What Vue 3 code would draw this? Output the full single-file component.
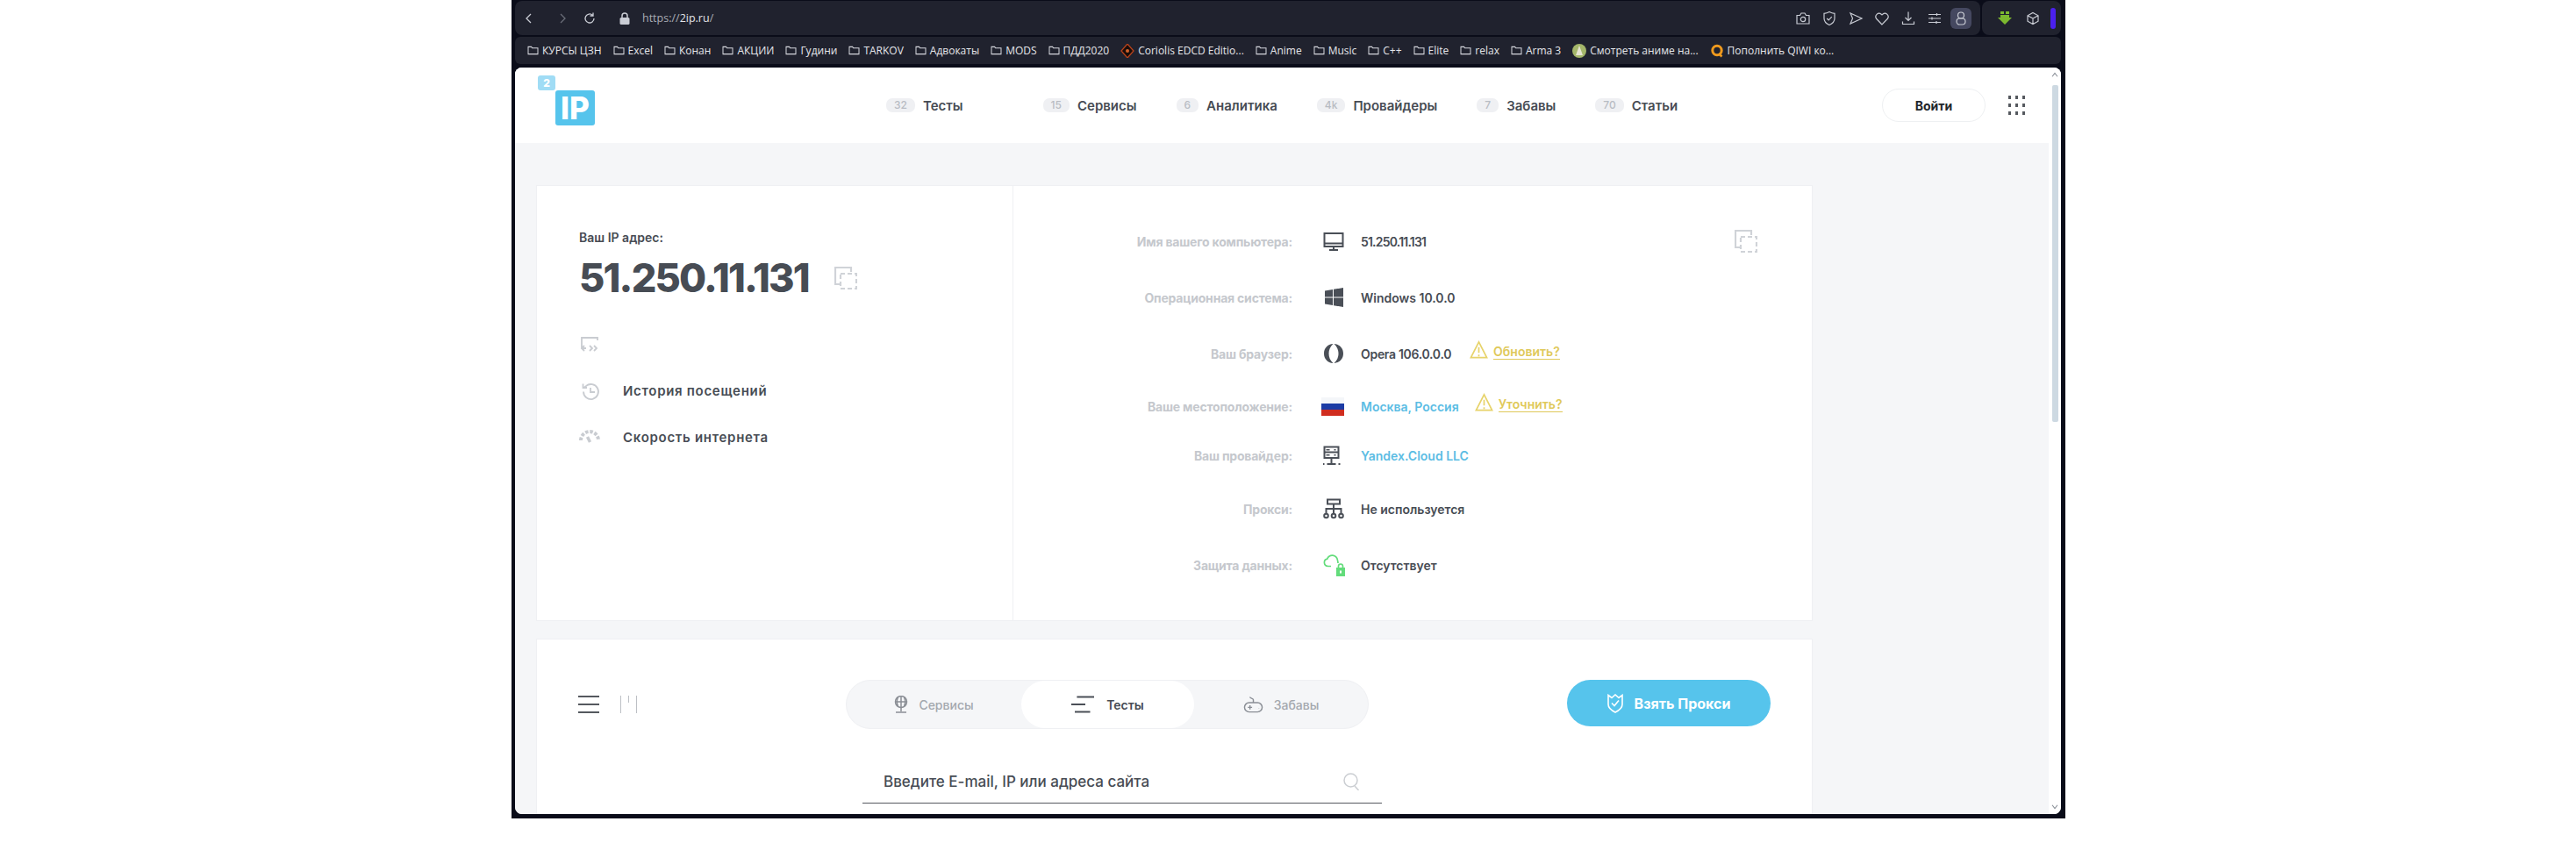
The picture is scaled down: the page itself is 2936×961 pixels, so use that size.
<script setup>
const bookmarks = [
  { t: 'КУРСЫ ЦЗН' }, { t: 'Excel' }, { t: 'Конан' }, { t: 'АКЦИИ' }, { t: 'Гудини' }, { t: 'TARKOV' },
  { t: 'Адвокаты' }, { t: 'MODS' }, { t: 'ПДД2020' }, { t: 'Coriolis EDCD Editio...', icon: 'cor' },
  { t: 'Anime' }, { t: 'Music' }, { t: 'C++' }, { t: 'Elite' }, { t: 'relax' }, { t: 'Arma 3' },
  { t: 'Смотреть аниме на...', icon: 'ani' }, { t: 'Пополнить QIWI ко...', icon: 'qiwi' }
]
const nav = [
  { n: '32', t: 'Тесты' }, { n: '15', t: 'Сервисы' }, { n: '6', t: 'Аналитика' },
  { n: '4k', t: 'Провайдеры' }, { n: '7', t: 'Забавы' }, { n: '70', t: 'Статьи' }
]
</script>

<template>
  <div class="window">
    <div class="toolbar">
      <div class="urlbar">
        <svg class="nb back" viewBox="0 0 16 16"><path d="M10 3 5 8l5 5" /></svg>
        <svg class="nb fwd dim" viewBox="0 0 16 16"><path d="m6 3 5 5-5 5" /></svg>
        <svg class="nb rel" viewBox="0 0 16 16"><path d="M13 8a5 5 0 1 1-1.600-3.700M12 1.500V5H8.500" /></svg>
        <svg class="lock" viewBox="0 0 12 14"><path d="M3 6.500V4a3 3 0 0 1 6 0v2.500" fill="none" stroke="#c9ccd4" stroke-width="1.500" /><rect x="0.500" y="6" width="11" height="8" rx="1.500" fill="#c9ccd4" /></svg>
        <span class="url">https://<b>2ip.ru</b>/</span>
        <span class="spacer"></span>
        <div class="actions">
          <svg class="tb" viewBox="0 0 18 18"><path d="M2 5.500h3.500L7 3h4l1.500 2.500H16v9.500H2z" /><circle cx="9" cy="10" r="2.700" /></svg>
          <svg class="tb" viewBox="0 0 18 18"><path d="M9 1.500c2 1.200 4 1.700 6 1.800V9c0 3.500-2.700 6-6 7.500C5.700 15 3 12.500 3 9V3.300c2-.1 4-.6 6-1.800zM6.200 9l2 2 3.600-3.800" /></svg>
          <svg class="tb" viewBox="0 0 18 18"><path d="M3 3 16 9 3 15l2.500-6z" /></svg>
          <svg class="tb" viewBox="0 0 18 18"><path d="M9 16 2.800 9.500a3.800 3.800 0 0 1 5.400-5.300l.8.800.8-.8a3.800 3.800 0 0 1 5.400 5.300z" /></svg>
          <svg class="tb" viewBox="0 0 18 18"><path d="M9 1.500v9.500M5.500 8 9 11.500 12.500 8M2.500 12.500v3h13v-3" /></svg>
          <svg class="tb" viewBox="0 0 18 18"><path d="M2 4.500h14M2 9h14M2 13.500h14M11.500 3v3M6 7.500v3M11 12v3" /></svg>
        </div>
        <span class="avatar"><svg class="tb" viewBox="0 0 18 18"><circle cx="9" cy="5.500" r="3.500" /><rect x="4" y="9" width="10" height="7" rx="3.500" /></svg></span>
      </div>
      <div class="extbar">
        <svg class="ext-dl" viewBox="0 0 16 15"><path d="M3 0h4v3H3zM9 0h4v3H9zM3 4h10v3h3l-8 8-8-8h3z" fill="#7cb82f" /></svg>
        <svg class="tb box" viewBox="0 0 16 16"><path d="M8 1.500 14 4.800v6.400L8 14.500l-6-3.300V4.800zM2 4.800 8 8l6-3.200M8 8v6.500" /></svg>
        <span class="purple"></span>
      </div>
    </div>
    <div class="bookmarks">
      <span v-for="b in bookmarks" :key="b.t" class="bm">
        <svg v-if="!b.icon" class="folder" viewBox="0 0 14 12"><path d="M1 10.500V1.500h4l1 1.500h7v7.500z" /></svg>
        <svg v-else-if="b.icon === 'cor'" class="fav" viewBox="0 0 16 16"><path d="M8 0 15 8 8 16 1 8z" fill="#1a0d0a" stroke="#b8431c" stroke-width="1.300" /><circle cx="8" cy="8" r="2" fill="#d2622a" /></svg>
        <svg v-else-if="b.icon === 'ani'" class="fav" viewBox="0 0 16 16"><circle cx="8" cy="8" r="8" fill="#a4b66a" /><path d="M8 2 12 13H4z" fill="#e6e4d2" /></svg>
        <svg v-else class="fav" viewBox="0 0 16 16"><circle cx="8" cy="7.500" r="5.200" fill="none" stroke="#ef9a1e" stroke-width="3" /><path d="m10 11 3.500 3.500" stroke="#ef9a1e" stroke-width="2.500" /></svg>
        {{ b.t }}
      </span>
    </div>

    <div class="page">
      <div class="content">
        <header class="head">
          <div class="logo">
            <span class="logo-2">2</span>
            <span class="logo-ip">IP</span>
          </div>
          <nav class="nav">
            <a v-for="i in nav" :key="i.t" class="nav-item"><span class="count">{{ i.n }}</span>{{ i.t }}</a>
          </nav>
          <button class="login">Войти</button>
          <div class="dots"><i v-for="d in 9" :key="d"></i></div>
        </header>

        <main class="main">
          <section class="card info">
            <div class="left">
              <div class="ip-label">Ваш IP адрес:</div>
              <div class="ip-row">
                <span class="ip">51.250.11.131</span>
                <svg class="copy big" viewBox="0 0 26 26"><path d="M6 20H1V1h18v5" /><path stroke-dasharray="5 3" d="M7 8h18v17H7z" /></svg>
              </div>
              <div class="links">
                <div class="link">
                  <svg class="lic" viewBox="0 0 24 24"><path d="M21 7V4H3v12h5M6 13l-3 3 3 3M12 13l3 3-3 3M17 13l3 3-3 3" /></svg>
                </div>
                <div class="link">
                  <svg class="lic" viewBox="0 0 24 24"><path d="M5 12.500a8.500 8.500 0 1 0 2.800-6.300L5.500 8M4.500 3.500V8h4.500M13 8v5h5" /></svg>
                  <span>История посещений</span>
                </div>
                <div class="link">
                  <svg class="lic" viewBox="0 0 24 24"><path stroke-width="4" stroke-dasharray="3.500 1.800" d="M2 15a10 10 0 0 1 20 0" /><path d="m9.500 11 3 6" stroke-width="3.500" /></svg>
                  <span>Скорость интернета</span>
                </div>
              </div>
            </div>
            <div class="right">
              <div class="rows">
                <div class="row r1">
                  <span class="k">Имя вашего компьютера:</span>
                  <svg class="ric" viewBox="0 0 24 24"><path d="M1.500 3h21v15h-21zM1.500 14.500h21M12 18v4M7 22h10" /></svg>
                  <span class="v tight">51.250.11.131</span>
                  <span class="spacer"></span>
                  <svg class="copy small" viewBox="0 0 26 26"><path d="M6 20H1V1h18v5" /><path stroke-dasharray="5 3" d="M7 8h18v17H7z" /></svg>
                </div>
                <div class="row r2">
                  <span class="k">Операционная система:</span>
                  <svg class="ric" viewBox="0 0 24 24"><path class="fill" d="M2 4.500 11 3v8.500H2zM12 2.800 23 1v10.500H12zM2 12.500h9V21l-9-1.500zM12 12.500h11V23l-11-1.800z" /></svg>
                  <span class="v">Windows 10.0.0</span>
                </div>
                <div class="row r3">
                  <span class="k">Ваш браузер:</span>
                  <svg class="ric" viewBox="0 0 24 24"><path class="fill" d="M11.500 1C5 1.500 1 6 1 12s4 10.500 10.500 11C8 20 6.500 16 6.500 12S8 4 11.500 1zM12.500 1c6.500.5 10.500 5 10.500 11s-4 10.500-10.500 11c3.500-3 5-7 5-11S16 4 12.500 1z" /></svg>
                  <span class="v semi">Opera 106.0.0.0</span>
                  <svg class="warn" viewBox="0 0 22 22"><path d="M11 2 1.500 20.500h19zM11 8v7M11 17v2" /></svg>
                  <a class="fix">Обновить?</a>
                </div>
                <div class="row r4">
                  <span class="k">Ваше местоположение:</span>
                  <span class="flag"><i></i><i></i><i></i></span>
                  <span class="v blue">Москва, Россия</span>
                  <svg class="warn w2" viewBox="0 0 22 22"><path d="M11 2 1.500 20.500h19zM11 8v7M11 17v2" /></svg>
                  <a class="fix">Уточнить?</a>
                </div>
                <div class="row r5">
                  <span class="k">Ваш провайдер:</span>
                  <svg class="ric" viewBox="2.500 0 24 24"><path class="fill" d="M3 1.500h18v14.500H3z" /><path class="hole" d="M5 3.500h14v4H5zM5 9.500h14v4.500H5z" /><path class="fill" d="M6 5h4v1.500H6zM15 5h2v1.500h-2zM6 11h4v1.500H6zM15 11h2v1.500h-2z" /><path d="M12 16v6M7 22h10M2 22h2M20 22h2" /></svg>
                  <span class="v blue">Yandex.Cloud LLC</span>
                </div>
                <div class="row r6">
                  <span class="k">Прокси:</span>
                  <svg class="ric" viewBox="0 0 24 24"><path d="M5 1.500h14v5H5zM12 6.500V17M3.500 17v-5h17v5" /><circle cx="3.500" cy="20" r="2.300" /><circle cx="12" cy="20" r="2.300" /><circle cx="20.500" cy="20" r="2.300" /></svg>
                  <span class="v">Не используется</span>
                </div>
                <div class="row r7">
                  <span class="k">Защита данных:</span>
                  <svg class="ric green" viewBox="0 0 25 25"><path d="M9 13.500H5.500a4.200 4.200 0 0 1-.8-8.300C5.500 2.500 8.500.8 11 1.200c2.500.4 5 2.500 5.500 5.500.2 1 .5 2 .5 3.300" /><path class="gfill" d="M15 15h10v10H15z" /><path d="M17.500 15v-1.500a2.500 2.500 0 0 1 5 0V15" /><path class="hole" d="M19 18.500h2v3h-2z" /></svg>
                  <span class="v">Отсутствует</span>
                </div>
              </div>
            </div>
          </section>

          <section class="card tools">
            <div class="tools-top">
              <div class="view">
                <span class="burger"><i></i><i></i><i></i></span>
                <span class="cols"><i></i><i class="short"></i><i></i></span>
              </div>
              <div class="tabs">
                <div class="tab">
                  <svg class="tabic" viewBox="0 0 16 20"><circle cx="8" cy="7" r="6.500" /><path d="M1.500 7h13M8 .5v13M4.500 2c-1.500 3-1.500 7 0 10M11.500 2c1.500 3 1.500 7 0 10M8 13.500V18M2 19h12" /></svg>
                  Сервисы
                </div>
                <div class="tab active">
                  <svg class="tabic dark" viewBox="0 0 26 20"><path d="M6.400 1.500H26M0 10h16M4 18.500h17.500" /></svg>
                  Тесты
                </div>
                <div class="tab">
                  <svg class="tabic pad" viewBox="0 0 24 20"><path d="M12 8V4.500C12 2.500 8 3 8 1" /><rect x="1.500" y="8" width="21" height="11" rx="5.500" /><path d="M5.500 13.500h5M8 11v5M16 12v.1M18.500 15v.1" /></svg>
                  Забавы
                </div>
              </div>
              <button class="proxy">
                <svg viewBox="0 0 18 22"><path d="M1 1.500l4 3L9 1l4 3.500 4-3V12c0 4-4 7-8 9-4-2-8-5-8-9z" /><path d="m5 10.500 3 3 5-6" /></svg>
                Взять Прокси
              </button>
            </div>
            <div class="search">
              <span>Введите E-mail, IP или адреса сайта</span>
              <svg viewBox="0 0 20 20"><circle cx="8.500" cy="8.500" r="7.500" /><path d="m13 15 4.500 5" /></svg>
            </div>
          </section>
        </main>
      </div>
      <aside class="scroll">
        <svg class="arrow" viewBox="0 0 10 8"><path d="m1 7 4-5 4 5" /></svg>
        <div class="track"><div class="thumb"></div></div>
        <svg class="arrow" viewBox="0 0 10 8"><path d="m1 1 4 5 4-5" /></svg>
      </aside>
    </div>
  </div>
</template>

<style>
html, body { margin: 0; background: #fff; overflow: hidden; }
</style>

<style scoped>
.window {
  margin-left: 583px;
  width: 1771px;
  height: 933px;
  box-sizing: border-box;
  background: #0a0c19;
  padding: 1px 5px 5px 4px;
  display: flex;
  flex-direction: column;
  font-family: Inter, "Noto Sans", sans-serif;
  overflow: hidden;
}
.toolbar { height: 41px; display: flex; gap: 2px; flex: none; }
.urlbar {
  flex: 1;
  height: 39px;
  background: #20222e;
  border-radius: 8px;
  display: flex;
  align-items: center;
  padding: 0 10px 0 8px;
}
.extbar {
  width: 90px;
  height: 39px;
  box-sizing: border-box;
  background: #20222e;
  border-radius: 8px;
  display: flex;
  align-items: center;
  padding: 0 0 0 18px;
  gap: 16px;
  flex: none;
}
.nb { width: 16px; height: 16px; fill: none; stroke: #c9ccd4; stroke-width: 1.300; flex: none; }
.nb.dim { stroke: #6a6d78; }
.fwd { margin-left: 22px; }
.rel { margin-left: 15px; }
.tb { width: 18px; height: 18px; fill: none; stroke: #c9ccd4; stroke-width: 1.200; flex: none; }
.tb.box { width: 16px; height: 16px; }
.actions { display: flex; gap: 12px; }
.lock { width: 12px; height: 14px; margin-left: 26px; flex: none; }
.url { font: 12.500px "Open Sans", sans-serif; color: #a9acb5; margin-left: 14px; }
.url b { font-weight: 400; color: #e3e4e8; }
.spacer { flex: 1; }
.avatar {
  width: 24px; height: 24px; background: #454860; border-radius: 6px;
  display: flex; align-items: center; justify-content: center; margin-left: 9px;
}
.ext-dl { width: 16px; height: 15px; flex: none; }
.purple { width: 6px; height: 24px; background: #4b20ee; border-radius: 3px; margin-left: -4px; }
.bookmarks {
  height: 31px;
  flex: none;
  background: #20222e;
  border-radius: 6px;
  display: flex;
  align-items: center;
  padding-left: 14px;
  gap: 13px;
  font: 12px "Open Sans", sans-serif;
  color: #e5e6ea;
  white-space: nowrap;
}
.bm { display: flex; align-items: center; gap: 4px; }
.folder { width: 13px; height: 11px; fill: none; stroke: #d6d8de; stroke-width: 1.100; }
.fav { width: 16px; height: 16px; }
.page {
  margin-top: 4px;
  flex: 1;
  min-height: 0;
  display: flex;
  background: #fff;
  border-radius: 8px;
  overflow: hidden;
  color: #474c54;
  font-weight: 600;
}
.content { flex: 1; min-width: 0; overflow: hidden; background: #f5f6f8; }
.head {
  height: 86px;
  background: #fff;
  display: flex;
  align-items: center;
  padding: 0 27px 0 24px;
}
.logo { width: 70px; height: 70px; position: relative; margin-top: 2px; flex: none; }
.logo-2 {
  position: absolute; left: 2px; top: 0; width: 20px; height: 17px;
  background: #a0dcf5; border-radius: 3px; color: #fff;
  font: 800 12px/17px Inter, sans-serif; text-align: center;
}
.logo-ip {
  position: absolute; left: 22px; top: 17px; width: 45px; height: 40px;
  background: #56c4ec; border-radius: 3px; color: #fff;
  font: 800 35px/40px Inter, sans-serif; text-align: center;
}
.nav { display: flex; gap: 45px; margin-left: 329px; flex: 1; }
.nav-item { display: flex; align-items: center; gap: 9px; font-size: 15px; font-weight: 600; color: #474c54; white-space: nowrap; }
.nav-item:first-child { margin-right: 46px; }
.count {
  background: #eff0f3; color: #b8bcc3; font-size: 12px; font-weight: 500;
  border-radius: 7px; height: 16px; line-height: 16px; padding: 0 9px;
}
.login {
  width: 118px; height: 38px; background: #fff; border: 1px solid #eef0f2; border-radius: 19px;
  font: 700 14px Inter, sans-serif; color: #23262b; margin-right: 26px; padding: 0; flex: none;
}
.dots { display: grid; grid-template-columns: repeat(3, 3px); gap: 5px; flex: none; }
.dots i { width: 3px; height: 4px; background: #55595f; }
.main { padding: 49px 0 0 25px; width: 1453px; display: flex; flex-direction: column; gap: 22px; }
.card { background: #fff; box-shadow: 0 0 0 1px #eff0f3; }
.info { height: 495px; display: flex; flex: none; }
.left { width: 543px; padding: 49px 0 0 48px; box-sizing: border-box; border-right: 1px solid #eff0f3; flex: none; }
.ip-label { font-size: 14px; line-height: 20px; font-weight: 600; }
.ip-row { display: flex; align-items: center; margin-top: 8px; }
.ip { font-size: 45px; line-height: 56px; font-weight: 800; letter-spacing: -1.800px; color: #474c54; }
.copy { fill: none; stroke: #d0d3d8; stroke-width: 2.200; flex: none; }
.copy.big { width: 26px; height: 26px; margin-left: 29px; }
.copy.small { width: 26px; height: 26px; margin-right: 62px; }
.links { margin-top: 21px; display: flex; flex-direction: column; }
.link { height: 53px; display: flex; align-items: center; gap: 26px; font-size: 15px; letter-spacing: 0.700px; font-weight: 600; }
.lic { width: 24px; height: 24px; fill: none; stroke: #c9ccd1; stroke-width: 1.800; flex: none; }
.right { flex: 1; padding-top: 31px; }
.rows { display: flex; flex-direction: column; }
.row { display: flex; align-items: center; font-size: 14px; height: 64px; }
.r4 { height: 56px; }
.r5 { height: 56px; }
.r6 { height: 66px; }
.r7 { height: 62px; }
.k { width: 318px; text-align: right; color: #c5c8cd; font-weight: 700; font-size: 14px; flex: none; white-space: nowrap; letter-spacing: -0.200px; }
.v { font-weight: 600; margin-left: 19px; white-space: nowrap; font-size: 14px; }
.v.tight { letter-spacing: -0.800px; }
.v.semi { letter-spacing: -0.300px; }
.blue { color: #5cbde4; }
.ric { width: 24px; height: 24px; margin-left: 35px; fill: none; stroke: #4a4f57; stroke-width: 2; flex: none; }
.ric .fill { fill: #4a4f57; stroke: none; }
.ric .hole { fill: #fff; stroke: none; }
.ric.green { width: 25px; height: 25px; stroke: #63dc7b; margin-right: -1px; stroke-width: 1.700; }
.ric .gfill { fill: #63dc7b; stroke: none; }
.flag { width: 26px; height: 21px; margin-left: 33px; display: flex; flex-direction: column; flex: none; }
.flag i { flex: 1; }
.flag i:nth-child(1) { background: #f4f6f9; }
.flag i:nth-child(2) { background: #1c3ca5; }
.flag i:nth-child(3) { background: #d02d1f; }
.warn { width: 21px; height: 21px; fill: none; stroke: #e7d36b; stroke-width: 1.800; flex: none; margin: -9px 6px 0 21px; }
.warn.w2 { margin-left: 18px; }
.fix { font-size: 14px; color: #dfc95a; border-bottom: 1px solid #dfc95a; font-weight: 600; line-height: 16px; margin-top: -3px; white-space: nowrap; }
.tools { height: 240px; flex: none; padding: 46px 47px 0 47px; box-sizing: border-box; }
.tools-top { display: flex; align-items: flex-start; height: 56px; }
.view { display: flex; align-items: flex-start; gap: 24px; width: 305px; flex: none; padding-top: 18px; box-sizing: border-box; }
.burger { display: flex; flex-direction: column; gap: 7px; width: 24px; flex: none; }
.burger i { height: 2px; background: #55595f; }
.cols { display: flex; gap: 8px; height: 20px; width: 20px; flex: none; }
.cols i { width: 1px; height: 20px; background: #bdc0c5; }
.cols i.short { height: 8px; }
.tabs {
  width: 596px; height: 56px; background: #f5f6f8; border: 1px solid #eff0f3; border-radius: 28px;
  display: grid; grid-template-columns: 199px 197px 198px; box-sizing: border-box; flex: none;
}
.tab {
  display: flex; align-items: center; justify-content: center; gap: 12px;
  font-size: 14px; color: #a4a8ae; font-weight: 500; border-radius: 28px;
}
.tab.active { background: #fff; color: #474c54; font-weight: 600; gap: 14px; }
.tabic { width: 16px; height: 20px; fill: none; stroke: #8a8e95; stroke-width: 1.500; flex: none; }
.tabic.pad { width: 23px; }
.tabic.dark { width: 26px; stroke: #4a4f57; stroke-width: 2; }
.proxy {
  margin-left: auto; width: 232px; height: 53px; border: 0; background: #56c4ec; border-radius: 27px;
  color: #fff; font: 700 16px Inter, sans-serif; display: flex; align-items: center; justify-content: center; gap: 13px;
  padding: 0; flex: none;
}
.proxy svg { width: 18px; height: 22px; fill: none; stroke: #fff; stroke-width: 1.600; flex: none; }
.search {
  width: 592px; height: 50px; margin: 35px 0 0 324px; border-bottom: 1px solid #55595f; box-sizing: border-box;
  display: flex; align-items: center; justify-content: space-between; padding: 0 24px 0 24px;
  font-size: 17px; font-weight: 500; color: #474c54;
}
.search svg { width: 20px; height: 20px; fill: none; stroke: #cbced2; stroke-width: 1.500; flex: none; }
.scroll { width: 14px; background: #fff; display: flex; flex-direction: column; align-items: center; padding: 5px 0 5px; box-sizing: border-box; flex: none; }
.arrow { width: 8px; height: 6px; fill: none; stroke: #8b9199; stroke-width: 1.500; flex: none; }
.track { flex: 1; width: 7px; margin: 9px 0 4px; }
.thumb { height: 384px; background: #cdd9e2; border-radius: 2px; }
</style>
